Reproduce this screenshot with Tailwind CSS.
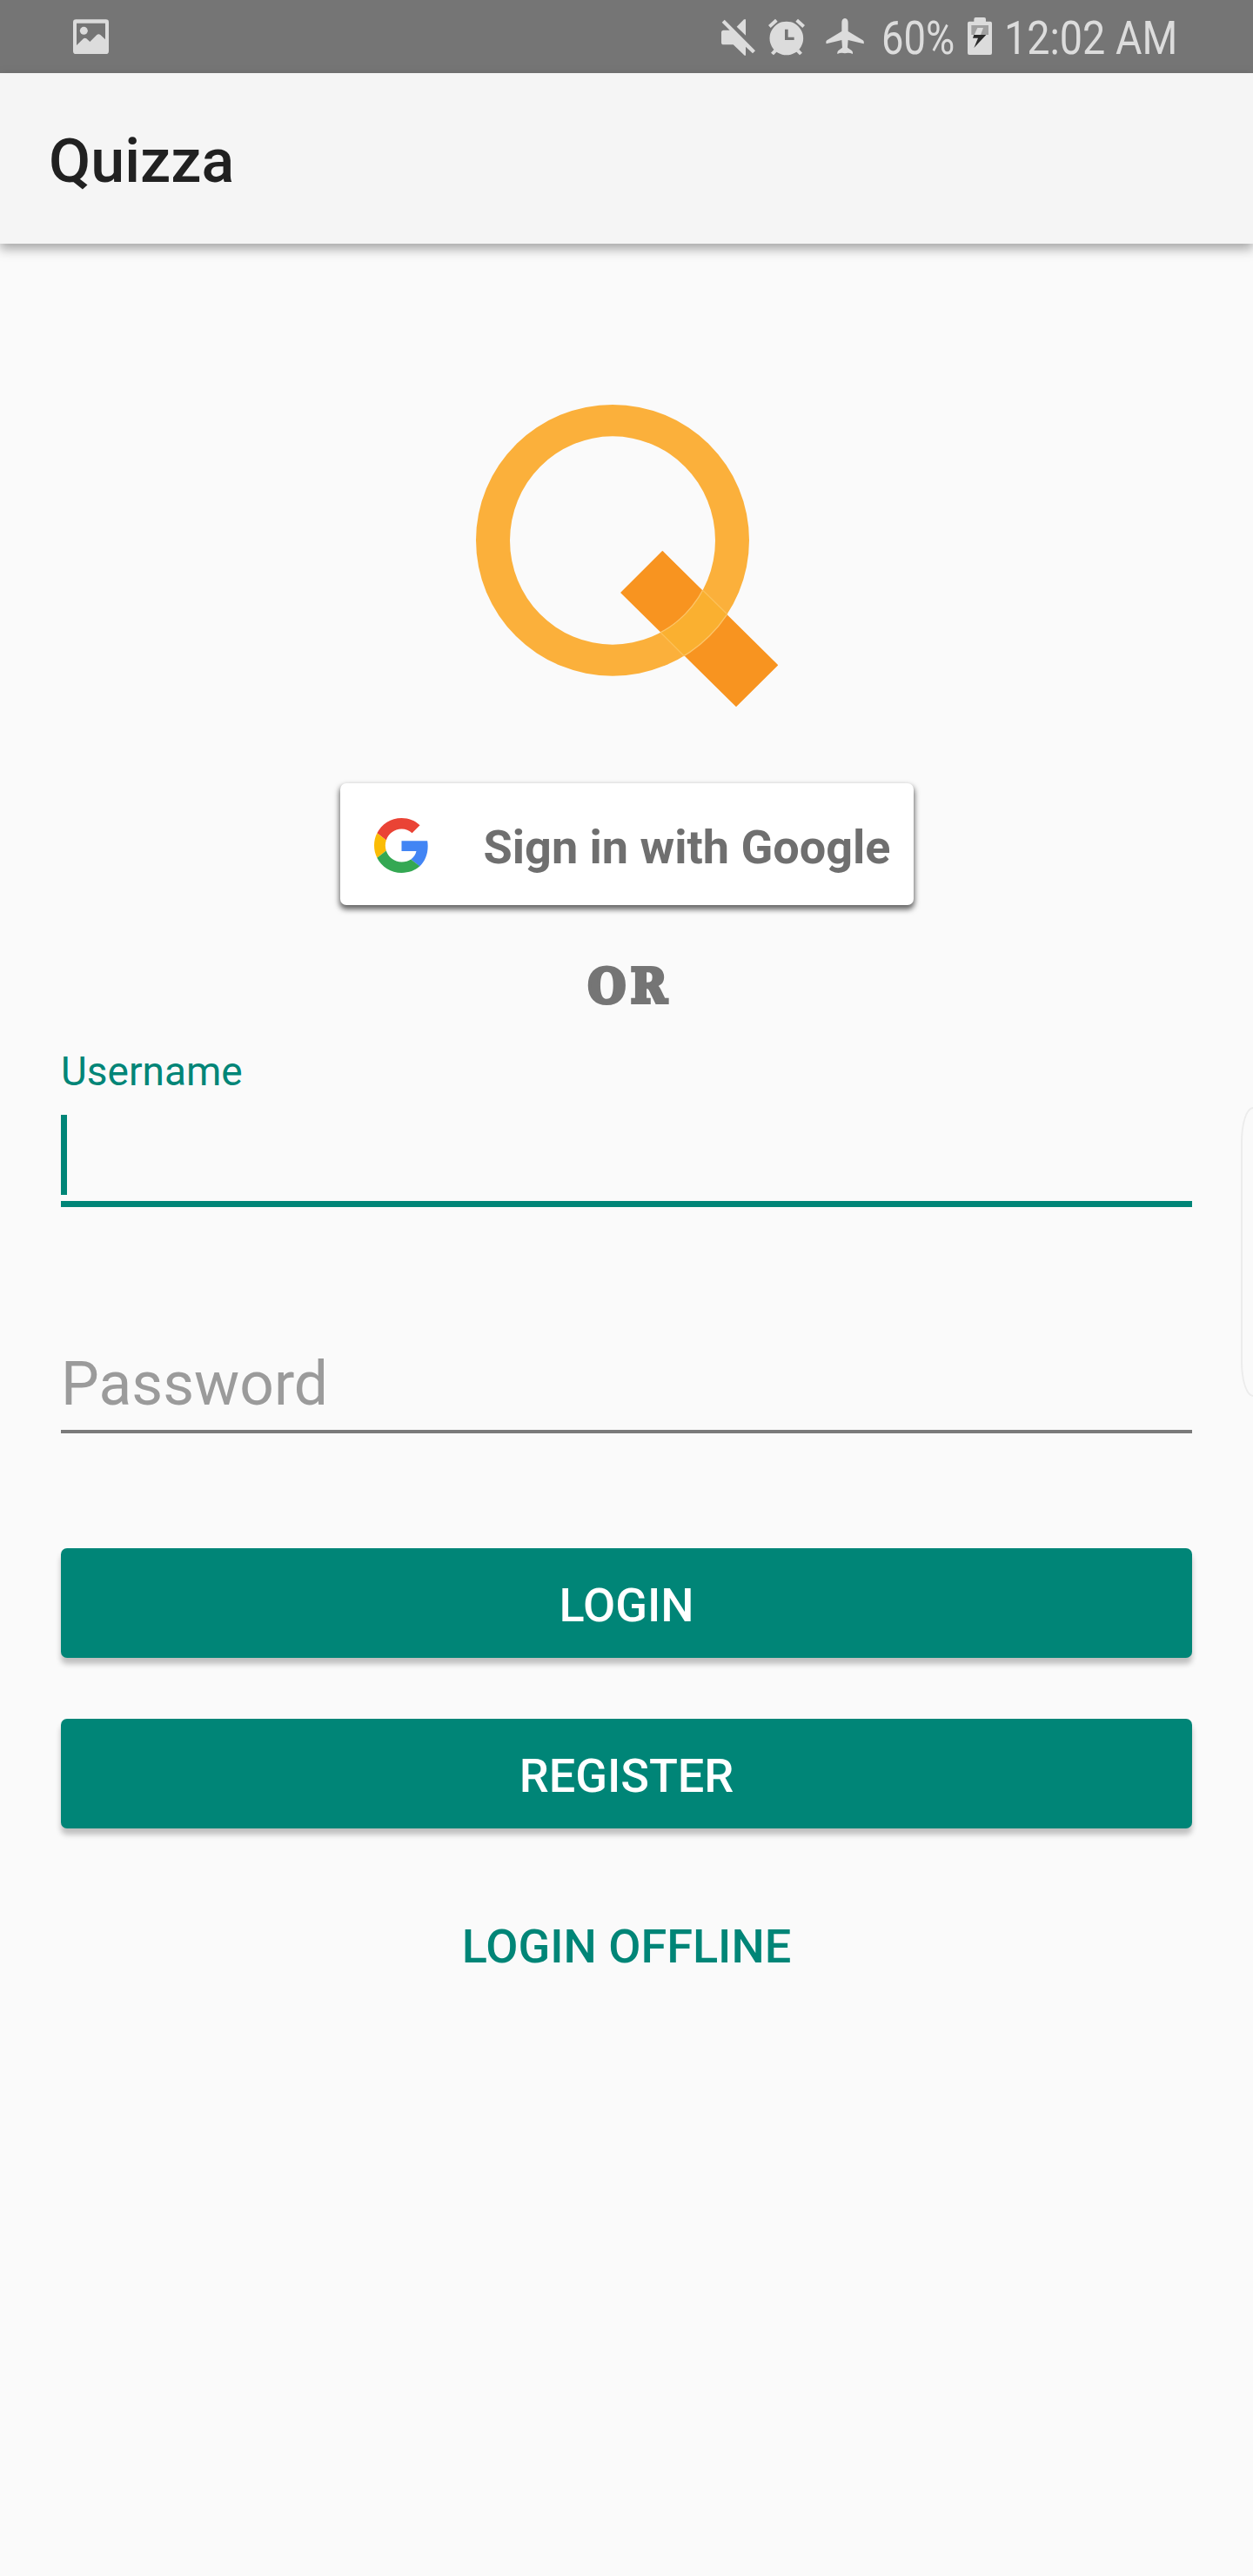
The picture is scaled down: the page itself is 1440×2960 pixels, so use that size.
<!DOCTYPE html>
<html lang="en">
<head>
<meta charset="utf-8">
<title>Quizza</title>
<script src="https://cdn.jsdelivr.net/npm/@tailwindcss/browser@4"></script>
</head>
<body class="relative flex h-[2960px] w-[1440px] flex-col overflow-hidden bg-[#fafafa] font-['Roboto',sans-serif]">
  <!-- Status bar -->
  <div class="flex h-[84px] shrink-0 items-start bg-[#757575] text-[#dcdcdc]">
    <svg class="ml-[84px] mt-[22px] h-[40px] w-[41px]" viewBox="252 66 123 120" fill="currentColor"><path fill-rule="evenodd" d="M262 67H365Q375 67 375 77V176Q375 186 365 186H262Q252 186 252 176V77Q252 67 262 67ZM264 80V156L288 133Q293 129 298 133L310 144L334 120Q340 115 346 120L363 136V80Z"/><circle cx="289" cy="106" r="13.500"/></svg>
    <svg class="ml-[704px] mt-[22px] h-[42px] w-[39px]" viewBox="87 65 117 126" fill="currentColor"><path d="M98 67L204 174L195 183L171 160V190H167L128 153H95Q87 153 87 145V111Q87 103 95 103H116L89 76ZM140 91L165 66H171V121Z"/></svg>
    <svg class="ml-[15px] mt-[21px] h-[43px] w-[42px]" viewBox="249 63 126 129" fill="currentColor"><path fill-rule="evenodd" d="M312 74A58 58 0 1 1 311 74ZM306 101V138H338V128H317V101Z"/><path d="M249 87L273 65L281 74L257 96ZM351 65L375 87L367 96L343 74ZM269 170L279 178L267 190L258 182ZM355 170L345 178L357 190L366 182Z"/></svg>
    <svg class="ml-[24px] mt-[21px] h-[42px] w-[44px]" viewBox="447 63 132 126" fill="currentColor"><path d="M513 63Q524 65 524 78V108L575 139Q580 143 578 151L524 138L522 164L537 175Q541 179 540 186Q526 180 513 184Q500 180 487 186Q486 179 490 175L504 164L502 138L449 151Q446 143 451 139L502 108V78Q502 65 513 63Z"/></svg>
    <div class="ml-[20px] w-[86px] pt-[12px]"><div class="w-max origin-left scale-x-[0.840] text-[54px] leading-[63px]">60%</div></div>
    <svg class="ml-[13px] mt-[20px] h-[43px] w-[28px]" viewBox="36 60 84 129"><path fill="#dcdcdc" d="M58 74V66Q58 60 64 60H93Q99 60 99 66V74H114Q120 74 120 80V183Q120 189 114 189H42Q36 189 36 183V80Q36 74 42 74Z"/><path fill="#a0a0a0" d="M49 87H108V120H49Z"/><path fill="#dcdcdc" d="M70 96H90L81 120H100L98 124L57 130L60 118Z"/><path fill="#2b2b2b" d="M58 120H100L58 165L72 131H54Z"/></svg>
    <div class="ml-[14px] pt-[12px]"><div class="w-max origin-left scale-x-[0.865] text-[54px] leading-[63px]">12:02 AM</div></div>
  </div>

  <!-- App bar -->
  <header class="z-10 flex h-[196px] shrink-0 items-center bg-[#f5f5f5] pl-[56px] pt-[5px] shadow-[0_6px_12px_rgba(0,0,0,0.34)]">
    <h1 class="text-[70px] leading-[82px] font-medium text-[#212121]">Quizza</h1>
  </header>

  <main class="flex flex-col items-center px-[70px] pt-[160px]">
    <svg class="h-[400px] w-[400px]" viewBox="0 0 1200 1200">
      <defs><clipPath id="tail"><path d="M724 578L1123 973L978 1117L579 723Z"/></clipPath></defs>
      <path fill="#f89420" stroke="#f89420" stroke-width="4" stroke-linejoin="round" d="M724 581L1120 973L978 1114L582 723Z"/>
      <path id="ring" fill="#fbb03b" fill-rule="evenodd" d="M81 542.500a471 467.500 0 1 0 942 0a471 467.500 0 1 0 -942 0ZM198 543a354 359 0 1 0 708 0a354 359 0 1 0 -708 0Z"/>
      <g clip-path="url(#tail)"><path fill="#fab030" stroke="#fcc468" stroke-width="4" fill-rule="evenodd" d="M81 542.500a471 467.500 0 1 0 942 0a471 467.500 0 1 0 -942 0ZM198 543a354 359 0 1 0 708 0a354 359 0 1 0 -708 0Z"/></g>
      <path stroke="#fcc058" stroke-width="4" fill="none" d="M863 715L948 798M717 860L799 942"/>
    </svg>

    <button class="mt-[60px] flex h-[140px] w-[659px] items-center rounded-[7px] bg-white pl-[39px] shadow-[0_4px_6px_1px_rgba(0,0,0,0.6)]">
      <svg class="mt-[3px] h-[63px] w-[63px]" viewBox="0 0 48 48"><path fill="#EA4335" d="M24 9.500c3.540 0 6.710 1.220 9.210 3.600l6.850-6.850C35.900 2.380 30.470 0 24 0 14.620 0 6.510 5.380 2.560 13.220l7.980 6.190C12.430 13.720 17.740 9.500 24 9.500z"/><path fill="#4285F4" d="M46.980 24.550c0-1.570-.150-3.090-.380-4.550H24v9.020h12.940c-.580 2.960-2.260 5.480-4.780 7.180l7.730 6c4.510-4.180 7.090-10.360 7.090-17.650z"/><path fill="#FBBC05" d="M10.530 28.590c-.480-1.450-.760-2.990-.760-4.590s.270-3.140.760-4.590l-7.980-6.190C.920 16.460 0 20.120 0 24c0 3.880.920 7.540 2.560 10.780l7.970-6.190z"/><path fill="#34A853" d="M24 48c6.480 0 11.930-2.130 15.890-5.810l-7.730-6c-2.150 1.450-4.920 2.300-8.160 2.300-6.260 0-11.570-4.220-13.470-9.910l-7.980 6.190C6.510 42.620 14.620 48 24 48z"/></svg>
      <span class="ml-[63px] pt-[7px] text-[54px] leading-[64px] font-bold whitespace-nowrap text-[#6f6f6f]">Sign in with Google</span>
    </button>

    <div class="mt-[61px] h-[64px] scale-x-[0.93] pl-[7px] font-['DejaVu_Serif',serif] text-[54px] leading-[64px] font-bold tracking-[6px] text-[#757575] [-webkit-text-stroke:4px_#757575]">OR</div>

    <div class="mt-[38px] flex w-full flex-col">
      <label class="text-[46px] leading-[56px] text-[#008577]">Username</label>
      <div class="mt-[22px] h-[106px] border-b-[7px] border-[#008577]"><div class="h-[92px] w-[7px] bg-[#008577]"></div></div>
    </div>
    <div class="mt-[162px] flex h-[98px] w-full items-start border-b-[4px] border-[#7a7a7a] text-[69.5px] leading-[83px] text-[#9b9b9b]">Password</div>

    <button class="mt-[132px] h-[126px] w-full rounded-[7px] bg-[#008577] pt-[6px] text-[54px] leading-[66px] font-medium text-white shadow-[0_7px_6px_rgba(0,0,0,0.24)]">LOGIN</button>
    <button class="mt-[70px] h-[126px] w-full rounded-[7px] bg-[#008577] pt-[6px] text-[54px] leading-[66px] font-medium text-white shadow-[0_7px_6px_rgba(0,0,0,0.24)]">REGISTER</button>
    <button class="mt-[70px] h-[126px] w-full pt-[6px] text-[54px] leading-[66px] font-medium text-[#008577]">LOGIN OFFLINE</button>
  </main>

  <!-- Edge panel handle overlaid on the right side -->
  <div class="absolute top-[1272px] right-[-14px] h-[333px] w-[28px] rounded-[14px/40px] border-2 border-[#ececec]"></div>
</body>
</html>
